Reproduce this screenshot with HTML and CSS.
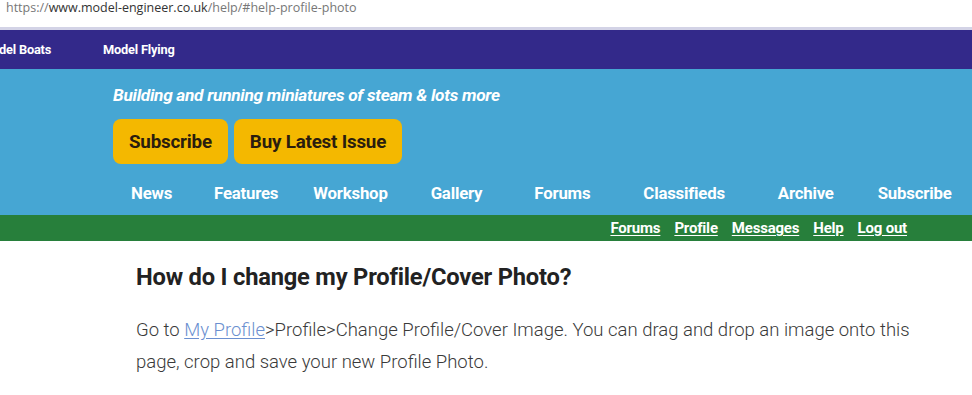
FILE: index.html
```html
<!DOCTYPE html>
<html lang="en">
<head>
<meta charset="utf-8">
<title>Help - Model Engineer</title>
<link rel="stylesheet" href="styles.css">
</head>
<body>
<div class="urlbar"><span class="dim">https://</span><span class="host">www.model-engineer.co.uk</span><span class="dim">/help/#help-profile-photo</span></div>
<nav class="sites">
  <a class="site first" href="#">Model Boats</a>
  <a class="site" href="#">Model Flying</a>
</nav>
<header class="masthead">
  <p class="tagline">Building and running miniatures of steam &amp; lots more</p>
  <div class="ctas">
    <a class="cta" href="#">Subscribe</a>
    <a class="cta" href="#">Buy Latest Issue</a>
  </div>
  <nav class="mainnav">
    <a class="n1" href="#">News</a>
    <a class="n2" href="#">Features</a>
    <a class="n3" href="#">Workshop</a>
    <a class="n4" href="#">Gallery</a>
    <a class="n5" href="#">Forums</a>
    <a class="n6" href="#">Classifieds</a>
    <a class="n7" href="#">Archive</a>
    <a class="n8" href="#">Subscribe</a>
  </nav>
</header>
<nav class="usernav">
  <a href="#">Forums</a>
  <a href="#">Profile</a>
  <a href="#">Messages</a>
  <a href="#">Help</a>
  <a href="#">Log out</a>
</nav>
<main class="content">
  <h2 class="q">How do I change my Profile/Cover Photo?</h2>
  <p class="a">Go to <a href="#">My Profile</a>&gt;Profile&gt;Change Profile/Cover Image. You can drag and drop an image onto this page, crop and save your new Profile Photo.</p>
</main>
</body>
</html>
```
FILE: styles.css
```css
* { box-sizing: border-box; }
html, body { margin: 0; padding: 0; background: #fff; overflow: hidden; }
body { font-family: Roboto, "Noto Sans", sans-serif; width: 972px; }

.urlbar {
  height: 30px;
  padding: 0 0 0 6px;
  font-family: "Open Sans", "Liberation Sans", sans-serif;
  font-size: 12.5px;
  line-height: 16px;
  color: #777;
  border-bottom: 3px solid #d3d3e6;
}
.urlbar .host { color: #333; }

.sites {
  background: #33298a;
  height: 39px;
  display: flex;
  align-items: center;
  gap: 52px;
}
.site {
  color: #fff;
  font-weight: 700;
  font-size: 12.8px;
  text-decoration: none;
  letter-spacing: -0.2px;
  white-space: nowrap;
}
.site.first { margin-left: -19px; }

.masthead {
  background: #46a6d3;
  height: 146px;
  padding: 15px 0 0 113px;
}
.tagline {
  margin: 0;
  color: #fff;
  font-size: 17.3px;
  font-weight: 700;
  font-style: italic;
  line-height: 22px;
  letter-spacing: -0.3px;
}
.ctas {
  display: flex;
  gap: 6px;
  margin-top: 13px;
}
.cta {
  background: #f4b800;
  color: #2b1d0e;
  border-radius: 8px;
  height: 45px;
  display: flex;
  align-items: center;
  padding: 0 16px;
  font-size: 18.8px;
  font-weight: 700;
  text-decoration: none;
  letter-spacing: -0.2px;
}
.mainnav {
  display: flex;
  margin-left: 18px;
  margin-top: 16px;
  height: 26px;
  align-items: center;
}
.mainnav a {
  color: #fff;
  font-weight: 700;
  font-size: 16.8px;
  text-decoration: none;
  letter-spacing: -0.2px;
  white-space: nowrap;
}
.mainnav .n2 { margin-left: 42px; }
.mainnav .n3 { margin-left: 35px; }
.mainnav .n4 { margin-left: 43px; }
.mainnav .n5 { margin-left: 52px; }
.mainnav .n6 { margin-left: 53px; }
.mainnav .n7 { margin-left: 53px; }
.mainnav .n8 { margin-left: 44px; }

.usernav {
  background: #277f3b;
  height: 26px;
  display: flex;
  justify-content: flex-end;
  align-items: center;
  gap: 14px;
  padding-right: 65px;
}
.usernav a {
  color: #fff;
  font-weight: 700;
  font-size: 15px;
  text-decoration: underline;
  text-underline-offset: 2px;
  letter-spacing: -0.2px;
}

.content {
  padding: 21px 0 0 136px;
  width: 930px;
}
.q {
  margin: 0;
  color: #222;
  font-size: 23.7px;
  font-weight: 700;
  line-height: 30px;
  letter-spacing: -0.2px;
}
.a {
  margin: 22px 0 0;
  color: #3a3a3a;
  font-size: 18.5px;
  font-weight: 300;
  line-height: 32px;
}
.a a { color: #6b8fd0; text-decoration: underline; text-underline-offset: 2px; }
```
